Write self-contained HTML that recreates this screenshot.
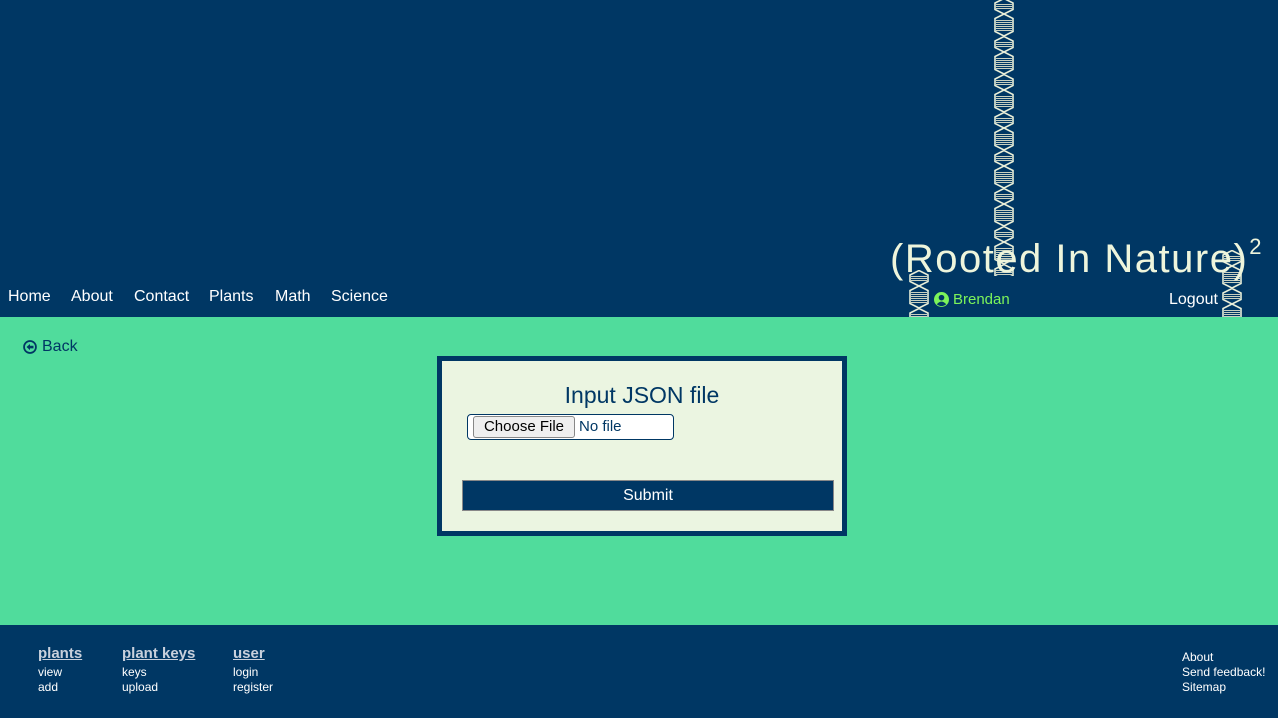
<!DOCTYPE html>
<html><head><meta charset="utf-8"><style>
*{margin:0;padding:0;box-sizing:border-box}
body{width:1278px;height:718px;overflow:hidden;font-family:"Liberation Sans",sans-serif;background:#50dc9c;position:relative}
#hdr{position:absolute;left:0;top:0;width:1278px;height:317px;background:#003764}
.nav{position:absolute;top:288px;color:#fff;font-size:16px}
#main{position:absolute;top:317px;left:0;width:1278px;height:308px;background:#50dc9c}
#foot{position:absolute;top:625px;left:0;width:1278px;height:93px;background:#003764;color:#fff}
.fh{position:absolute;top:20px;font-size:15px;color:#c8d0dc;text-decoration:underline;font-weight:bold}
.fl{position:absolute;font-size:12px;line-height:15px;color:#fff}
</style></head><body>
<div id="hdr">
<svg width="1278" height="317" style="position:absolute;left:0;top:0">
<defs>
<pattern id="dna" width="22" height="38" patternUnits="userSpaceOnUse">
<g stroke="#c8d0c0" stroke-width="1">
<path d="M3,6.5H19M3,8.5H19M3,10.5H19M3,22.5H19M3,24.5H19M3,26.5H19M3,28.5H19M3,30.5H19M3,32.5H19"/>
</g>
<g fill="none" stroke="#e8eed8" stroke-width="1.6">
<path d="M11,0.5 L20,5 L20,11.5 L11,16 L2,11.5 L2,5 Z"/>
<path d="M11,16 L20,20.5 L20,33.5 L11,38 L2,33.5 L2,20.5 Z"/>
</g>
</pattern>
</defs>
<g transform="translate(993,-2)"><rect x="0" y="0" width="22" height="278" fill="url(#dna)"/></g>
<g transform="translate(908,270)"><rect x="0" y="0" width="22" height="47" fill="url(#dna)"/></g>
<g transform="translate(1221,250)"><rect x="0" y="0" width="22" height="67" fill="url(#dna)"/></g>
</svg>
<div style="position:absolute;left:890px;top:234px;font-size:40px;color:#eef5dc;letter-spacing:1.5px;white-space:nowrap">(Rooted In Nature)<sup style="font-size:22px;vertical-align:18px;margin-left:1px">2</sup></div>
<div class="nav" style="left:8px">Home</div>
<div class="nav" style="left:71px">About</div>
<div class="nav" style="left:134px">Contact</div>
<div class="nav" style="left:209px">Plants</div>
<div class="nav" style="left:275px">Math</div>
<div class="nav" style="left:331px">Science</div>
<div style="position:absolute;left:934px;top:291px;color:#7cf45a;font-size:15px;display:flex;align-items:center">
<svg width="15" height="15" viewBox="0 0 16 16" style="margin-right:4px"><circle cx="8" cy="8" r="8" fill="#7cf45a"/><circle cx="8" cy="6" r="3" fill="#003764"/><path d="M3,13 Q8,7.5 13,13 Q8,17 3,13Z" fill="#003764"/></svg>Brendan</div>
<div style="position:absolute;left:1169px;top:291px;color:#fff;font-size:16px">Logout</div>
</div>
<div id="main">
<div style="position:absolute;left:23px;top:21px;color:#003764;font-size:16px;display:flex;align-items:center">
<svg width="14" height="14" viewBox="0 0 16 16" style="margin-right:5px"><circle cx="8" cy="8" r="6.8" fill="none" stroke="#003764" stroke-width="2"/><path d="M4,8 L8,4.5 V6.5 H12 V9.5 H8 V11.5Z" fill="#003764"/></svg>Back</div>
<div style="position:absolute;left:437px;top:39px;width:410px;height:180px;background:#ebf5e1;border:5px solid #003764">
<div style="position:absolute;top:21px;left:0;width:400px;text-align:center;font-size:23px;color:#003764">Input JSON file</div>
<div style="position:absolute;left:25px;top:53px;width:207px;height:26px;border:1px solid #003764;border-radius:4px;background:#fff;font-size:15px">
<div style="position:absolute;left:5px;top:1px;width:102px;height:22px;background:#efefef;border:1px solid #888;border-radius:3px;text-align:center;line-height:20px;color:#000">Choose File</div>
<div style="position:absolute;left:111px;top:3px;color:#003764">No file</div></div>
<div style="position:absolute;left:20px;top:119px;width:372px;height:31px;background:#003764;border:1px solid #888;color:#fff;text-align:center;line-height:29px;font-size:16px">Submit</div>
</div>
</div>
<div id="foot">
<div class="fh" style="left:38px">plants</div>
<div class="fl" style="left:38px;top:40px">view<br>add</div>
<div class="fh" style="left:122px">plant keys</div>
<div class="fl" style="left:122px;top:40px">keys<br>upload</div>
<div class="fh" style="left:233px">user</div>
<div class="fl" style="left:233px;top:40px">login<br>register</div>
<div class="fl" style="left:1182px;top:25px">About<br>Send feedback!<br>Sitemap</div>
</div>
</body></html>
